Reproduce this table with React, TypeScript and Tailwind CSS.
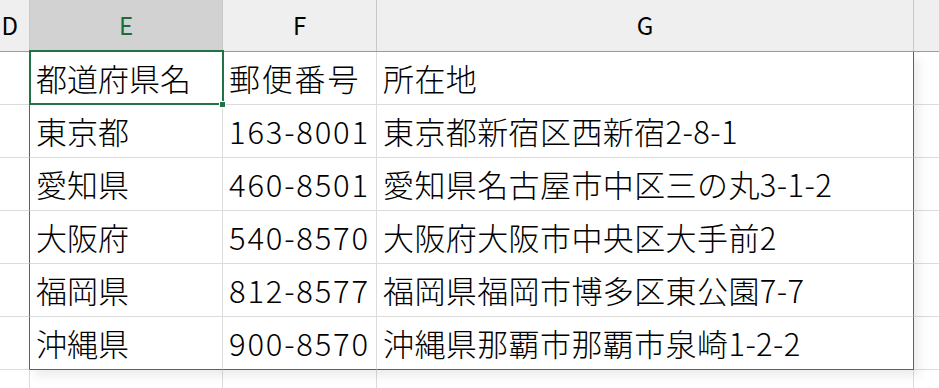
const rows = [
  ["都道府県名", "郵便番号", "所在地"],
  ["東京都", "163-8001", "東京都新宿区西新宿2-8-1"],
  ["愛知県", "460-8501", "愛知県名古屋市中区三の丸3-1-2"],
  ["大阪府", "540-8570", "大阪府大阪市中央区大手前2"],
  ["福岡県", "812-8577", "福岡県福岡市博多区東公園7-7"],
  ["沖縄県", "900-8570", "沖縄県那覇市那覇市泉崎1-2-2"],
];

const headers = ["D", "E", "F", "G"];

const font = { fontFamily: '"Noto Sans CJK JP", "Noto Sans", sans-serif' };

export default function App() {
  return (
    <div className="relative w-[939px] h-[388px] overflow-hidden bg-white text-black" style={font}>
      {/* Column headers */}
      <div className="grid grid-cols-[30px_193px_154px_537px_1fr] h-[52px] bg-[#efefef] border-b border-[#9c9c9c]">
        {headers.map((h) => (
          <div
            key={h}
            className={`flex items-center pb-[2px] border-r border-[#c8c8c8] text-2xl leading-none ${
              h === "D" ? "justify-end pr-[11px]" : "justify-center"
            } ${h === "E" ? "bg-[#d2d2d2] text-[#1d6b3c]" : ""}`}
          >
            {h}
          </div>
        ))}
        <div />
      </div>

      {/* Cells */}
      {rows.map((r, i) => {
        const last = i === rows.length - 1;
        return (
          <div key={i} className="grid grid-cols-[30px_193px_154px_537px_1fr] h-[53px] text-[31px] font-light leading-none">
            <div className="border-r border-r-[#3b63b3] border-b border-b-[#dcdcdc]" />
            <div className={`flex items-center pl-[6px] pb-[2px] border-r border-r-[#dcdcdc] border-b ${last ? "border-b-[#3b63b3]" : "border-b-[#dcdcdc]"}`}>{r[0]}</div>
            <div className={`flex items-center pl-[6px] pb-[2px] tracking-[1.8px] border-r border-r-[#dcdcdc] border-b ${last ? "border-b-[#3b63b3]" : "border-b-[#dcdcdc]"}`}>{r[1]}</div>
            <div className={`flex items-center pl-[6px] pb-[2px] tracking-[0.4px] border-r border-r-[#3b63b3] border-b ${last ? "border-b-[#3b63b3]" : "border-b-[#dcdcdc]"}`}>{r[2]}</div>
            <div className="border-b border-b-[#dcdcdc]" />
          </div>
        );
      })}
      <div className="grid grid-cols-[30px_193px_154px_537px_1fr] h-[30px]">
        <div className="border-r border-[#dcdcdc]" />
        <div className="border-r border-[#dcdcdc]" />
        <div className="border-r border-[#dcdcdc]" />
        <div className="border-r border-[#dcdcdc]" />
        <div />
      </div>

      {/* Table drop shadow */}
      <div className="pointer-events-none absolute left-[29px] top-[52px] w-[885px] h-[318px] shadow-[5px_6px_10px_rgba(0,0,0,0.08)]" />

      {/* Active cell selection */}
      <div className="pointer-events-none absolute left-[29px] top-[50px] w-[195px] h-[55px] border-2 border-[#217346]" />
      <div className="pointer-events-none absolute left-[219px] top-[101px] w-[7px] h-[7px] bg-[#217346] border border-white" />
    </div>
  );
}
